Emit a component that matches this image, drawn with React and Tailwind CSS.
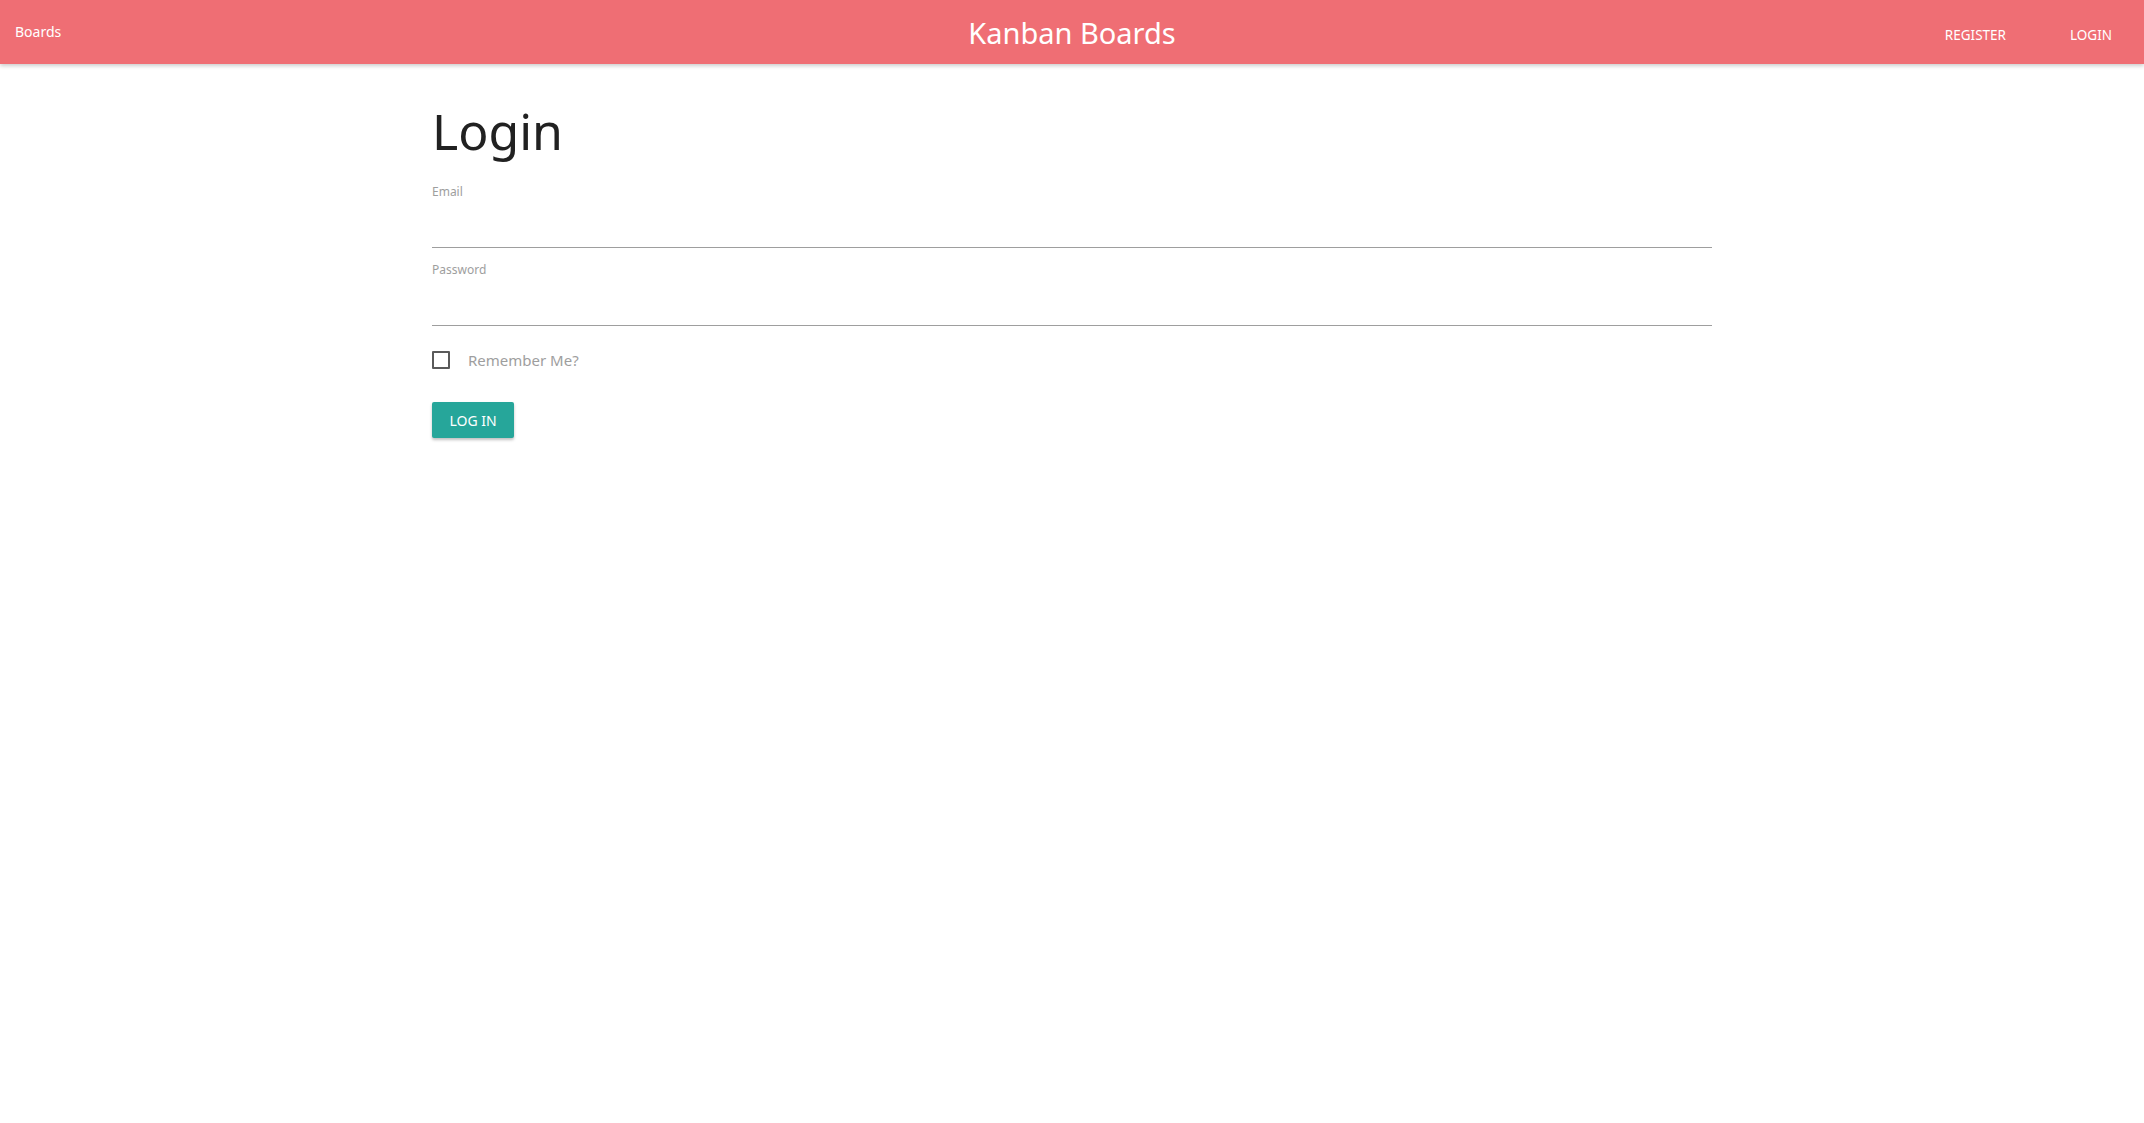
import React from 'react';

const font = { fontFamily: '"Noto Sans", "Open Sans", sans-serif' };

const Navbar = () => (
  <nav className="relative z-10 grid h-16 grid-cols-3 items-center bg-[#ef6e74] text-white shadow-[0_2px_4px_rgba(0,0,0,0.2)]">
    <a href="#" className="justify-self-start pl-[15px] text-[14px] leading-none">Boards</a>
    <a href="#" className="justify-self-center text-[29px] leading-none pt-[1px]">Kanban Boards</a>
    <ul className="flex justify-self-end text-[13.5px] uppercase">
      <li><a href="#" className="block px-8 pt-[6px]">Register</a></li>
      <li><a href="#" className="block px-8 pt-[6px]">Login</a></li>
    </ul>
  </nav>
);

const Field = ({ label, type, gap }) => (
  <div className={`flex flex-col ${gap}`}>
    <label className="text-[12px] leading-none text-[#9e9e9e]">{label}</label>
    <input type={type} className="h-[50px] border-b border-[#9e9e9e] bg-transparent outline-none" />
  </div>
);

export default function App() {
  return (
    <div className="min-h-screen bg-white" style={font}>
      <Navbar />
      <main className="mx-auto w-[1280px]">
        <h1 className="pt-[31px] text-[50px] leading-[72px] text-[#212121]">Login</h1>
        <form className="mt-[19px] flex flex-col">
          <Field label="Email" type="email" gap="" />
          <Field label="Password" type="password" gap="mt-[16px]" />
        </form>
        <label className="mt-[22px] flex h-6 items-center gap-[18px]">
          <span className="h-[18px] w-[18px] rounded-[1px] border-2 border-[#5a5a5a]" />
          <span className="text-[15px] leading-6 text-[#9e9e9e]">Remember Me?</span>
        </label>
        <button className="mt-[30px] h-9 w-[82px] rounded-[2px] bg-[#26a69a] text-[14px] uppercase text-white shadow-[0_2px_3px_rgba(0,0,0,0.25)]">
          Log in
        </button>
      </main>
    </div>
  );
}
